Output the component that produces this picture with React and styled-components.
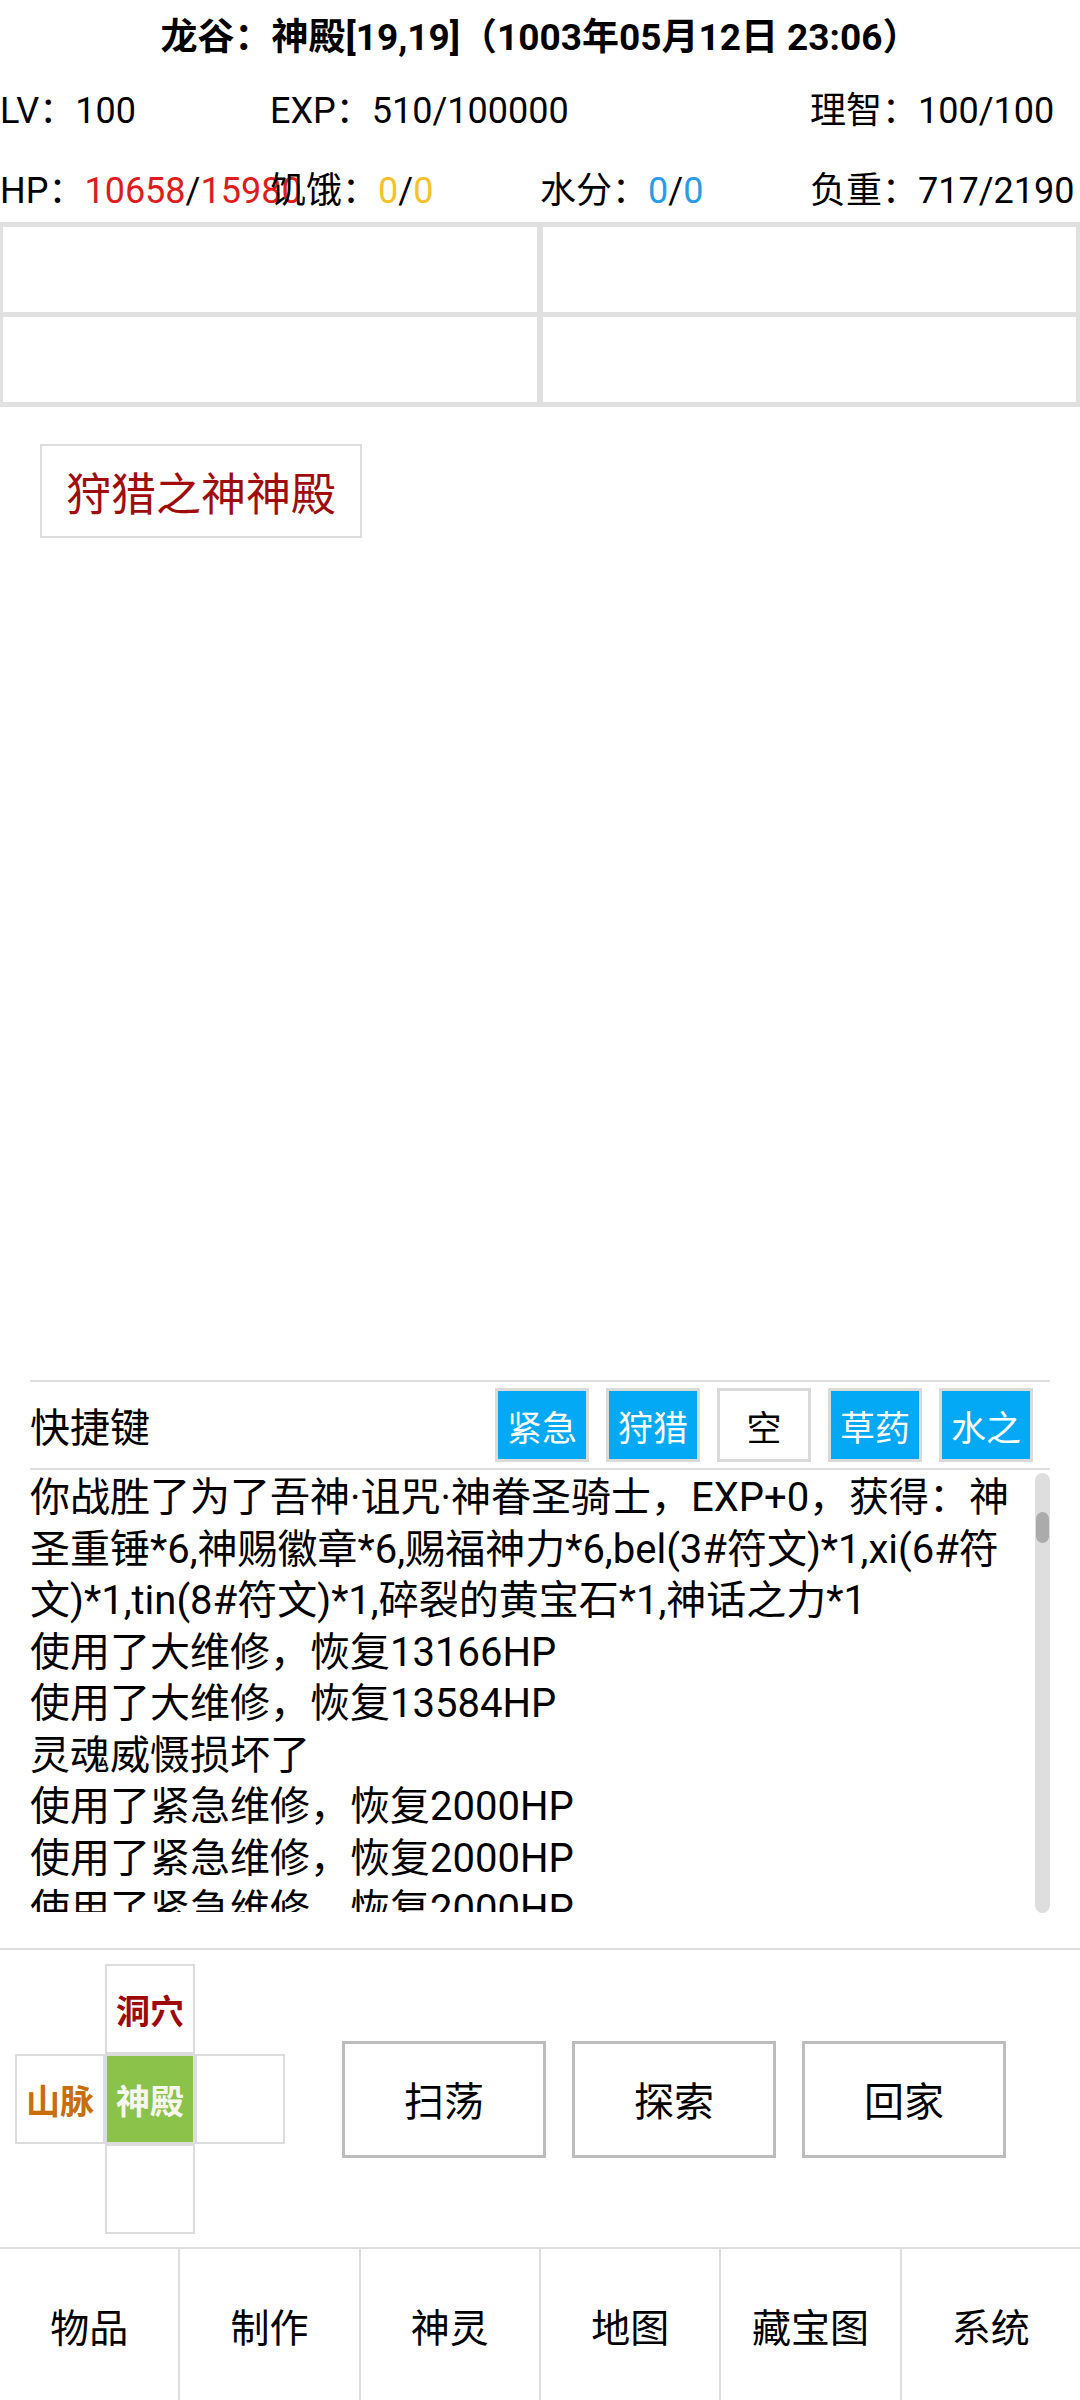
import React from "react";
import styled, { createGlobalStyle } from "styled-components";

const GlobalStyle = createGlobalStyle`
  html, body {
    margin: 0;
    padding: 0;
    background: #fff;
  }
  body {
    font-family: Roboto, "Noto Sans CJK SC", sans-serif;
    color: #000;
  }
  * {
    box-sizing: border-box;
  }
`;

const stats = [
  [
    { label: "LV", parts: [{ text: "100" }] },
    { label: "EXP", parts: [{ text: "510/100000" }] },
    null,
    { label: "理智", parts: [{ text: "100/100" }] },
  ],
  [
    {
      label: "HP",
      parts: [
        { text: "10658", color: "#e01b1b" },
        { text: "/" },
        { text: "15980", color: "#e01b1b" },
      ],
    },
    {
      label: "饥饿",
      parts: [{ text: "0", color: "#f7c12b" }, { text: "/" }, { text: "0", color: "#f7c12b" }],
    },
    {
      label: "水分",
      parts: [{ text: "0", color: "#2a9be6" }, { text: "/" }, { text: "0", color: "#2a9be6" }],
    },
    { label: "负重", parts: [{ text: "717/2190" }] },
  ],
];

const shortcuts = [
  { name: "紧急", on: true },
  { name: "狩猎", on: true },
  { name: "空", on: false },
  { name: "草药", on: true },
  { name: "水之", on: true },
];

const logs = [
  "你战胜了为了吾神·诅咒·神眷圣骑士，EXP+0，获得：神圣重锤*6,神赐徽章*6,赐福神力*6,bel(3#符文)*1,xi(6#符文)*1,tin(8#符文)*1,碎裂的黄宝石*1,神话之力*1",
  "使用了大维修，恢复13166HP",
  "使用了大维修，恢复13584HP",
  "灵魂威慑损坏了",
  "使用了紧急维修，恢复2000HP",
  "使用了紧急维修，恢复2000HP",
  "使用了紧急维修，恢复2000HP",
  "使用了紧急维修，恢复2000HP",
];

const pad = [
  null,
  { name: "洞穴", color: "#9c0a0a" },
  null,
  { name: "山脉", color: "#c86e0c" },
  { name: "神殿", color: "#f6f6ee", here: true },
  { name: "" },
  null,
  { name: "" },
  null,
];

const tabs = ["物品", "制作", "神灵", "地图", "藏宝图", "系统"];

const App = () => {
  return (
    <Screen>
      <GlobalStyle />
      <Title>龙谷：神殿[19,19]（1003年05月12日 23:06）</Title>
      <StatsGrid>
        {stats.map((row, r) =>
          row.map((s, i) =>
            s ? (
              <Stat key={`${r}-${i}`} $low={r === 1}>
                {s.label}：
                {s.parts.map((p, j) => (
                  <Val key={j} $color={p.color}>
                    {p.text}
                  </Val>
                ))}
              </Stat>
            ) : (
              <Stat key={`${r}-${i}`} $low={r === 1} />
            )
          )
        )}
      </StatsGrid>
      <SlotGrid>
        <Slot />
        <Slot />
        <Slot />
        <Slot />
      </SlotGrid>
      <PlaceArea>
        <PlaceButton>狩猎之神神殿</PlaceButton>
      </PlaceArea>
      <Console>
        <ShortcutBar>
          <ShortcutLabel>快捷键</ShortcutLabel>
          <Shortcuts>
            {shortcuts.map((s, i) => (
              <ShortcutButton key={i} $on={s.on}>
                {s.name}
              </ShortcutButton>
            ))}
          </Shortcuts>
        </ShortcutBar>
        <LogArea>
          <LogText>
            {logs.map((l, i) => (
              <LogLine key={i}>{l}</LogLine>
            ))}
          </LogText>
          <ScrollTrack>
            <ScrollThumb />
          </ScrollTrack>
        </LogArea>
      </Console>
      <MoveBar>
        <DPad>
          {pad.map((c, i) =>
            c ? (
              <PadCell key={i} $color={c.color} $here={c.here}>
                {c.name}
              </PadCell>
            ) : (
              <PadBlank key={i} />
            )
          )}
        </DPad>
        <Actions>
          <ActionButton>扫荡</ActionButton>
          <ActionButton>探索</ActionButton>
          <ActionButton>回家</ActionButton>
        </Actions>
      </MoveBar>
      <NavBar>
        {tabs.map((t) => (
          <NavTab key={t}>{t}</NavTab>
        ))}
      </NavBar>
    </Screen>
  );
};

const Screen = styled.div`
  width: 1080px;
  height: 2400px;
  display: flex;
  flex-direction: column;
  overflow: hidden;
`;

const Title = styled.h1`
  margin: 0;
  height: 74px;
  line-height: 76px;
  text-align: center;
  font-size: 37px;
  font-weight: 700;
`;

const StatsGrid = styled.div`
  display: grid;
  grid-template-columns: repeat(4, 270px);
  grid-auto-rows: 74px;
  font-size: 36px;
`;

const Stat = styled.div`
  white-space: nowrap;
  line-height: ${(p) => (p.$low ? "62px" : "74px")};
  padding-top: ${(p) => (p.$low ? "12px" : "0")};
`;

const Val = styled.span`
  color: ${(p) => p.$color || "#000"};
`;

const SlotGrid = styled.div`
  display: grid;
  grid-template-columns: 1fr 1fr;
  gap: 5px 6px;
  padding: 5px 4px 5px 3px;
  background: #e0e0e0;
`;

const Slot = styled.div`
  height: 85px;
  background: #fff;
`;

const PlaceArea = styled.div`
  flex: 1;
  padding: 37px 40px 0;
`;

const PlaceButton = styled.button`
  width: 322px;
  height: 94px;
  padding: 0;
  border: 2px solid #dcdcdc;
  background: #fff;
  font: inherit;
  font-size: 45px;
  color: #a00c0c;
`;

const Console = styled.section`
  margin: 0 30px 36px;
  border-top: 2px solid #dedede;
`;

const ShortcutBar = styled.div`
  height: 88px;
  display: flex;
  align-items: center;
  justify-content: space-between;
  border-bottom: 2px solid #dedede;
`;

const ShortcutLabel = styled.span`
  font-size: 40px;
`;

const Shortcuts = styled.div`
  display: flex;
  gap: 17px;
  padding-right: 17px;
`;

const ShortcutButton = styled.button`
  width: 94px;
  height: 74px;
  padding: 0;
  border: 3px solid #dadada;
  background: ${(p) => (p.$on ? "#03a9f4" : "#fff")};
  color: ${(p) => (p.$on ? "#fff" : "#000")};
  font: inherit;
  font-size: 35px;
`;

const LogArea = styled.div`
  height: 442px;
  display: flex;
`;

const LogText = styled.div`
  width: 990px;
  padding-top: 2px;
  overflow: hidden;
  font-size: 40px;
  line-height: 51.5px;
`;

const LogLine = styled.div``;

const ScrollTrack = styled.div`
  width: 15px;
  margin: 3px 0 0 15px;
  height: 440px;
  border-radius: 8px;
  background: #dedede;
  padding-top: 39px;
`;

const ScrollThumb = styled.div`
  width: 13px;
  height: 31px;
  margin: 0 auto;
  border-radius: 7px;
  background: #ababab;
`;

const MoveBar = styled.div`
  height: 299px;
  border-top: 2px solid #dedede;
  padding: 14px 0 0 15px;
  display: flex;
  align-items: flex-start;
`;

const DPad = styled.div`
  display: grid;
  grid-template-columns: repeat(3, 90px);
  grid-template-rows: repeat(3, 90px);
`;

const PadCell = styled.div`
  border: 2px solid #dcdcdc;
  background: ${(p) => (p.$here ? "#8bc34a" : "#fff")};
  color: ${(p) => p.$color || "#000"};
  font-size: 34px;
  font-weight: 700;
  display: flex;
  align-items: center;
  justify-content: center;
`;

const PadBlank = styled.div``;

const Actions = styled.div`
  height: 270px;
  margin-left: 57px;
  display: flex;
  align-items: center;
  gap: 26px;
`;

const ActionButton = styled.button`
  width: 204px;
  height: 117px;
  padding: 0;
  border: 3px solid #bdbdbd;
  background: #fff;
  color: #000;
  font: inherit;
  font-size: 40px;
`;

const NavBar = styled.nav`
  height: 153px;
  border-top: 2px solid #dedede;
  display: flex;
`;

const NavTab = styled.div`
  flex: 1;
  display: flex;
  align-items: center;
  justify-content: center;
  font-size: 39px;
  & + & {
    border-left: 2px solid #dedede;
  }
`;

export default App;
